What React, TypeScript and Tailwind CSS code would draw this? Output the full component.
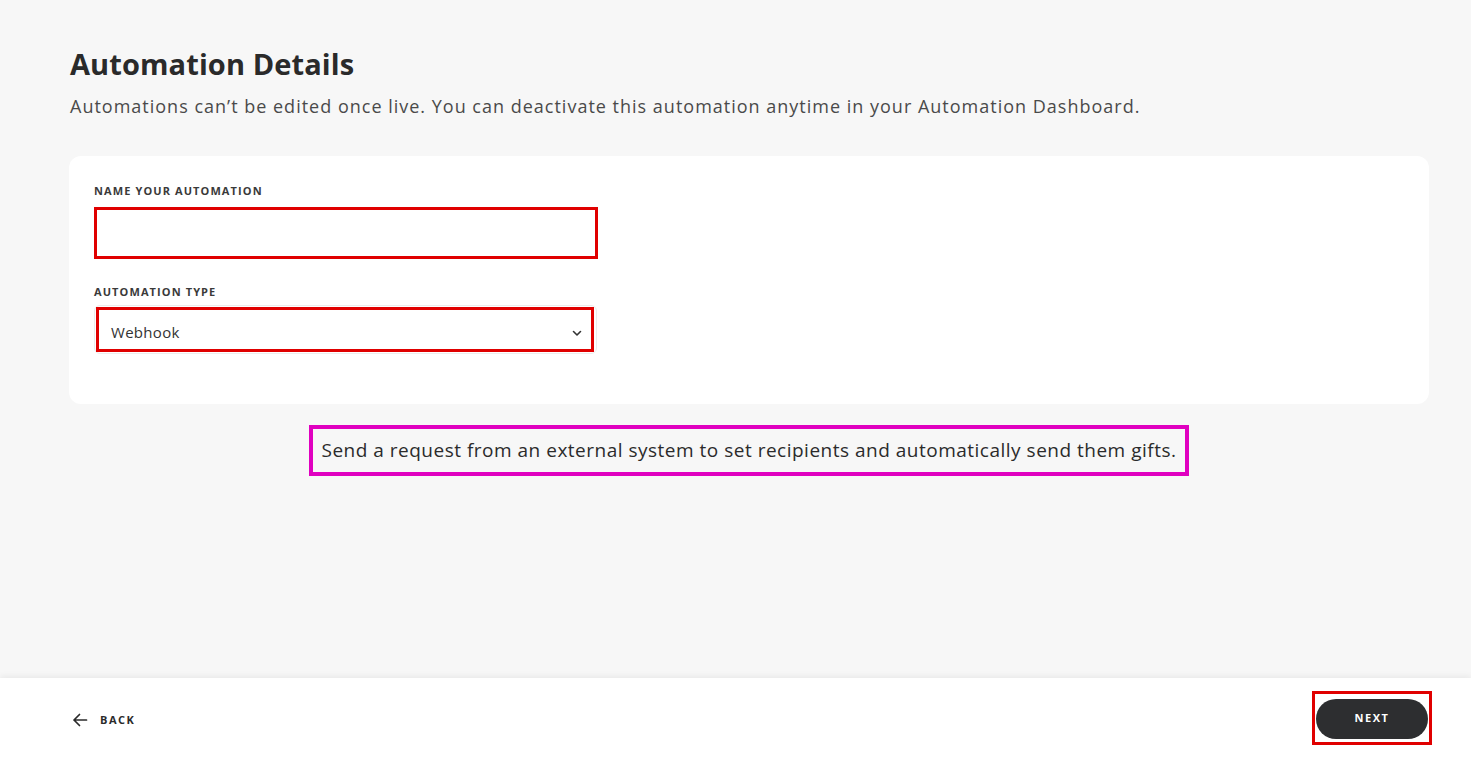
import React from "react";

export default function App() {
  return (
    <div
      className="h-[758px] w-full flex flex-col bg-[#f7f7f7] text-[#2b2b2b] overflow-hidden"
      style={{ fontFamily: '"Open Sans", "Liberation Sans", sans-serif' }}
    >
      <main className="flex-1 pl-[69px] pr-[42px] pt-[44px]">
        <h1 className="pl-[1px] text-[29px] leading-[40px] font-bold tracking-[0.1px] text-[#2a2a2a]">
          Automation Details
        </h1>
        <p className="pl-[1px] mt-[9px] text-[18px] leading-[26px] tracking-[1px] text-[#4a4a4a]">
          Automations can’t be edited once live. You can deactivate this automation anytime in your Automation Dashboard.
        </p>

        <section className="mt-[37px] bg-white rounded-[12px] h-[248px] pt-[29px] pl-[25px]">
          <label className="block text-[11px] leading-[12px] font-bold tracking-[1.1px] text-[#3a3a3a]">
            NAME YOUR AUTOMATION
          </label>
          <div className="mt-[10px] w-[504px] h-[52px] border-[3px] border-[#e00000] bg-white"></div>

          <label className="block mt-[27px] text-[11px] leading-[12px] font-bold tracking-[1.1px] text-[#3a3a3a]">
            AUTOMATION TYPE
          </label>
          <div className="relative mt-[7px] w-[503px] h-[49px] rounded-[6px] border border-[#ececec] bg-white">
            <div className="absolute left-[1px] top-[1px] w-[498px] h-[45px] border-[3px] border-[#e00000] flex items-center justify-between pl-[12px] pr-[8px] pt-[5px]">
              <span className="text-[15px] tracking-[0.3px] text-[#333]">Webhook</span>
              <svg width="12" height="12" viewBox="0 0 12 12" fill="none" className="mt-[2px]">
                <path d="M2.5 4.5 L6 8 L9.5 4.5" stroke="#333" strokeWidth="1.6" strokeLinecap="round" strokeLinejoin="round" />
              </svg>
            </div>
          </div>
        </section>

        <div className="flex justify-center mt-[21px]">
          <div className="border-[4px] border-[#e000c0] h-[51px] px-[9px] flex items-center">
            <span className="text-[19px] tracking-[0.5px] text-[#2b2b2b]">
              Send a request from an external system to set recipients and automatically send them gifts.
            </span>
          </div>
        </div>
      </main>

      <footer className="h-[80px] bg-white shadow-[0_-2px_6px_rgba(0,0,0,0.06)] flex items-center justify-between pl-[72px] pr-[39px]">
        <button className="mt-[4px] flex items-center gap-[12px] text-[11px] font-bold tracking-[1.5px] text-[#2b2b2b]">
          <svg width="16" height="16" viewBox="0 0 16 16" fill="none">
            <path d="M14.5 8 H2 M7.5 2.5 L2 8 L7.5 13.5" stroke="#2b2b2b" strokeWidth="1.7" strokeLinecap="round" strokeLinejoin="round" />
          </svg>
          BACK
        </button>
        <div className="border-[3px] border-[#e00000] w-[120px] h-[54px] flex items-center justify-center pt-[1px]">
          <button className="w-[112px] h-[40px] rounded-full bg-[#2d2e30] text-white text-[11px] font-bold tracking-[1.5px]">
            NEXT
          </button>
        </div>
      </footer>
    </div>
  );
}
